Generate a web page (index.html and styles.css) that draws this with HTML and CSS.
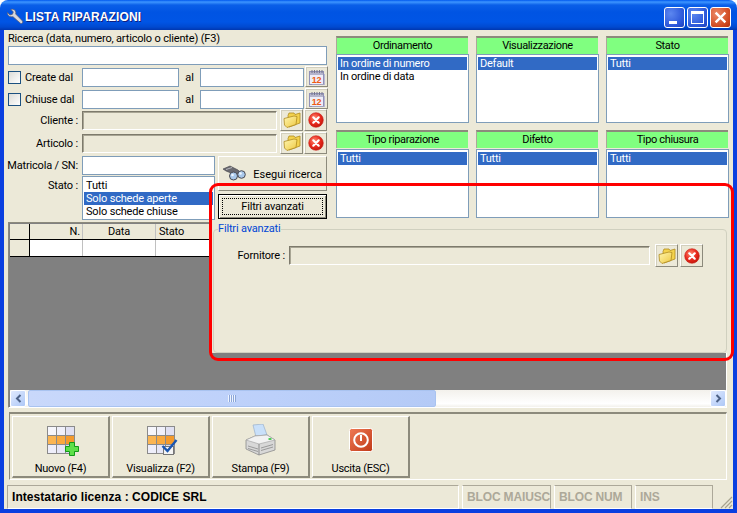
FILE: index.html
```html
<!DOCTYPE html>
<html lang="it">
<head>
<meta charset="utf-8">
<title>Lista riparazioni</title>
<link rel="stylesheet" href="styles.css">
</head>
<body>
<svg class="defs" width="0" height="0" aria-hidden="true">
  <defs>
    <linearGradient id="fold" x1="0" y1="0" x2="1" y2="1"><stop offset="0" stop-color="#fff6b0"/><stop offset="1" stop-color="#eec840"/></linearGradient>
    <radialGradient id="redb" cx=".4" cy=".35" r=".75"><stop offset="0" stop-color="#ff8a70"/><stop offset=".55" stop-color="#e8281c"/><stop offset="1" stop-color="#b81408"/></radialGradient>
    <linearGradient id="ubtn" x1="0" y1="0" x2="1" y2="1"><stop offset="0" stop-color="#ef7a55"/><stop offset="1" stop-color="#c03a18"/></linearGradient>
    <symbol id="i-cal" viewBox="0 0 16 16">
      <rect x=".5" y="2.500" width="14" height="13" fill="#eeeef8" stroke="#9090b8"/>
      <rect x="1" y="3" width="13" height="3" fill="#b4b4cc"/>
      <path d="M3 1v3M5.500 1v3M8 1v3M10.500 1v3M13 1v3" stroke="#77778a"/>
      <path d="M15.500 5v11H3" fill="none" stroke="#b8b8d0"/>
      <text x="7.500" y="14" class="cal-day">12</text>
    </symbol>
    <symbol id="i-folder" viewBox="0 0 18 16">
      <path d="M5 3.500l1-2.500 h5l1 1.500 5-1.500 v10l-11 4z" fill="#f3d24d" stroke="#b08c20" stroke-width=".8"/>
      <path d="M1 6.500l10-2.500 3 .5-1 8-9 3-2.500-2.500z" fill="url(#fold)" stroke="#b08c20" stroke-width=".8"/>
    </symbol>
    <symbol id="i-del" viewBox="0 0 16 16">
      <circle cx="8" cy="8" r="7.300" fill="url(#redb)" stroke="#c8201a" stroke-width=".6"/>
      <path d="M5.300 5.300l5.400 5.400M10.700 5.300l-5.400 5.400" stroke="#fff" stroke-width="2.200" stroke-linecap="round"/>
    </symbol>
    <symbol id="i-bino" viewBox="0 0 24 16">
      <path d="M1 4l7-3 4 2 4 2 3 3-6 2-4-2-5-2z" fill="#6a6a70" stroke="#3e3e44" stroke-width=".6"/>
      <path d="M4 4.500l6-2" stroke="#b8b8be"/>
      <circle cx="11.500" cy="11" r="4" fill="#a9c8ea" stroke="#4a4a52"/>
      <circle cx="19.500" cy="9.500" r="3.800" fill="#a9c8ea" stroke="#4a4a52"/>
      <circle cx="10.500" cy="10" r="1.300" fill="#eef6ff"/>
      <circle cx="18.500" cy="8.500" r="1.300" fill="#eef6ff"/>
    </symbol>
    <symbol id="i-grid" viewBox="0 0 28 28">
      <rect x="0" y="0" width="28" height="28" fill="#8a8a8a"/>
      <rect x="1" y="1" width="8" height="8" fill="#f6f6fc"/><rect x="10" y="1" width="8" height="8" fill="#f0f0fa"/><rect x="19" y="1" width="8" height="8" fill="#e0e0f2"/>
      <rect x="1" y="10" width="8" height="8" fill="#fbb552"/><rect x="10" y="10" width="8" height="8" fill="#f9a93e"/><rect x="19" y="10" width="8" height="8" fill="#f49a2c"/>
      <rect x="1" y="19" width="8" height="8" fill="#eeeefa"/><rect x="10" y="19" width="8" height="8" fill="#e6e6f6"/><rect x="19" y="19" width="8" height="8" fill="#dcdcf0"/>
    </symbol>
    <symbol id="i-print" viewBox="0 0 32 32">
      <path d="M8 1l10-1 4 11-11 2z" fill="#c9e0fa" stroke="#9ab0cc" stroke-width=".7"/>
      <path d="M1 16l9-4 12-1 8 5v10l-16 5L1 25z" fill="#d8d8d8" stroke="#8b8b8b" stroke-width=".8"/>
      <path d="M1 16l13 4 16-4-8-5-12 1z" fill="#f2f2f2" stroke="#a8a8a8" stroke-width=".7"/>
      <path d="M14 20v11" stroke="#8b8b8b"/>
      <path d="M3 22l10 3M3 24.500l10 3M16 24l12-3.500M16 26.500l12-3.500" stroke="#9a9a9a"/>
      <ellipse cx="25" cy="15" rx="1.800" ry="1.100" fill="#45c84a"/>
    </symbol>
    <symbol id="i-exit" viewBox="0 0 24 24">
      <rect x=".5" y=".5" width="23" height="23" rx="2" fill="url(#ubtn)" stroke="#fff"/>
      <circle cx="12" cy="12" r="6.800" fill="none" stroke="#fff" stroke-width="2"/>
      <path d="M12 7v6" stroke="#fff" stroke-width="2"/>
    </symbol>
  </defs>
</svg>

<div class="window">
  <header class="titlebar">
    <svg class="title-icon" viewBox="0 0 18 18" width="18" height="18"><path d="M1.500 4.500L4 7l2.500-.8L7.300 3.800 4.800 1.500C7 .5 9.500 1.800 9.800 4.200L9.700 6l6.800 7c1 1.200-.6 3.200-2 2.300L7 8.700c-3 .6-5.800-1.200-5.500-4.200z" fill="#d8d8dc" stroke="#5a5a70" stroke-width=".7"/></svg>
    <h1 class="title-text">LISTA RIPARAZIONI</h1>
    <div class="win-buttons">
      <span class="win-btn"><span class="glyph-min"></span></span>
      <span class="win-btn"><span class="glyph-max"></span></span>
      <span class="win-btn win-close"><svg viewBox="0 0 12 12" width="13" height="13"><path d="M1.500 1.500l9 9M10.500 1.500l-9 9" stroke="#fff" stroke-width="2.200"/></svg></span>
    </div>
  </header>
  <div class="window-body">
    <main class="client">
      <section class="search-area">
        <div class="form">
          <div class="search-label">Ricerca (data, numero, articolo o cliente) (F3)</div>
          <div class="field search-input"></div>
          <div class="date-row">
            <span class="check"></span><span class="date-label">Create dal</span>
            <span class="field date-from"></span><span class="al">al</span><span class="field date-to"></span>
            <button class="tool-btn"><svg width="16" height="16"><use href="#i-cal"/></svg></button>
          </div>
          <div class="date-row">
            <span class="check"></span><span class="date-label">Chiuse dal</span>
            <span class="field date-from"></span><span class="al">al</span><span class="field date-to"></span>
            <button class="tool-btn"><svg width="16" height="16"><use href="#i-cal"/></svg></button>
          </div>
          <div class="pick-row">
            <span class="form-label">Cliente :</span><span class="disabled-field"></span>
            <button class="tool-btn tall"><svg width="18" height="16"><use href="#i-folder"/></svg></button>
            <button class="tool-btn tall"><svg width="16" height="16"><use href="#i-del"/></svg></button>
          </div>
          <div class="pick-row second">
            <span class="form-label">Articolo :</span><span class="disabled-field"></span>
            <button class="tool-btn tall"><svg width="18" height="16"><use href="#i-folder"/></svg></button>
            <button class="tool-btn tall"><svg width="16" height="16"><use href="#i-del"/></svg></button>
          </div>
          <div class="lower">
            <div class="lower-left">
              <div class="lower-row">
                <span class="form-label">Matricola / SN:</span><span class="field serial"></span>
              </div>
              <div class="lower-row">
                <span class="form-label top">Stato :</span>
                <ul class="listbox state-list">
                  <li>Tutti</li><li class="sel">Solo schede aperte</li><li>Solo schede chiuse</li>
                </ul>
              </div>
            </div>
            <div class="lower-right">
              <button class="raised run-btn"><svg width="24" height="16"><use href="#i-bino"/></svg><span>Esegui ricerca</span></button>
              <button class="focus-btn"><span>Filtri avanzati</span></button>
            </div>
          </div>
        </div>
        <div class="filters">
          <div class="filter wide"><div class="filter-head">Ordinamento</div><ul class="listbox"><li class="sel">In ordine di numero</li><li>In ordine di data</li></ul></div>
          <div class="filter"><div class="filter-head">Visualizzazione</div><ul class="listbox"><li class="sel">Default</li></ul></div>
          <div class="filter"><div class="filter-head">Stato</div><ul class="listbox"><li class="sel">Tutti</li></ul></div>
          <div class="filter wide low"><div class="filter-head">Tipo riparazione</div><ul class="listbox"><li class="sel">Tutti</li></ul></div>
          <div class="filter low"><div class="filter-head">Difetto</div><ul class="listbox"><li class="sel">Tutti</li></ul></div>
          <div class="filter low"><div class="filter-head">Tipo chiusura</div><ul class="listbox"><li class="sel">Tutti</li></ul></div>
        </div>
      </section>

      <section class="grid-frame">
        <div class="grid-head">
          <span class="c-ind"></span><span class="c-n">N.</span><span class="c-data">Data</span><span class="c-stato">Stato</span>
        </div>
        <div class="grid-row">
          <span class="c-ind"></span><span class="c-n"></span><span class="c-data"></span><span class="c-stato"></span>
        </div>
        <div class="grid-empty"></div>
        <div class="hscroll">
          <span class="sb-btn"><svg width="9" height="9" viewBox="0 0 9 9"><path d="M6.500 1L3 4.500 6.500 8" fill="none" stroke="#4d6185" stroke-width="2"/></svg></span>
          <span class="sb-thumb"><span class="sb-grip"></span></span>
          <span class="sb-track"></span>
          <span class="sb-btn"><svg width="9" height="9" viewBox="0 0 9 9"><path d="M2.500 1L6 4.500 2.500 8" fill="none" stroke="#4d6185" stroke-width="2"/></svg></span>
        </div>
      </section>

      <section class="toolbar">
        <button class="big-btn"><span class="big-icon"><svg class="grid-ico" width="28" height="28"><use href="#i-grid"/></svg><svg class="badge" width="14" height="14" viewBox="0 0 14 14"><path d="M4.500 .5h5v4h4v5h-4v4h-5v-4h-4v-5h4z" fill="#5ee04a" stroke="#129a1a"/></svg></span><span>Nuovo (F4)</span></button>
        <button class="big-btn"><span class="big-icon"><svg class="grid-ico" width="28" height="28"><use href="#i-grid"/></svg><svg class="badge check-badge" width="17" height="17" viewBox="0 0 17 17"><rect x="2.500" y="8.500" width="10" height="8" fill="#f4f4f4" stroke="#777"/><path d="M1.500 8l5 5 9-11" fill="none" stroke="#1a55b0" stroke-width="2.400"/></svg></span><span>Visualizza (F2)</span></button>
        <button class="big-btn"><span class="big-icon"><svg width="32" height="32"><use href="#i-print"/></svg></span><span>Stampa (F9)</span></button>
        <button class="big-btn"><span class="big-icon"><svg width="24" height="24"><use href="#i-exit"/></svg></span><span>Uscita (ESC)</span></button>
      </section>

      <footer class="statusbar">
        <span class="st-main">Intestatario licenza : CODICE SRL</span>
        <span class="st-key st-caps">BLOC MAIUSC</span>
        <span class="st-key st-num">BLOC NUM</span>
        <span class="st-key st-ins">INS</span>
        <svg class="st-grip" width="14" height="14" viewBox="0 0 14 14"><path d="M13 2L2 13M13 6L6 13M13 10l-3 3" stroke="#a8a490" stroke-width="1.200"/></svg>
      </footer>

      <section class="advanced">
        <fieldset class="adv-group">
          <legend>Filtri avanzati</legend>
          <div class="adv-row">
            <span class="adv-label">Fornitore :</span>
            <span class="disabled-field"></span>
            <button class="tool-btn adv-btn"><svg width="18" height="16"><use href="#i-folder"/></svg></button>
            <button class="tool-btn adv-btn"><svg width="16" height="16"><use href="#i-del"/></svg></button>
          </div>
        </fieldset>
      </section>
    </main>
    <div class="annotation"></div>
  </div>
</div>
</body>
</html>
```

FILE: styles.css
```css
* { box-sizing: border-box; }
html, body { margin: 0; padding: 0; background: #fff; }
body { font: 11px Roboto, "Liberation Sans", Arial, sans-serif; letter-spacing: -.17px; color: #000; }
.defs { position: absolute; }
button { font: inherit; letter-spacing: inherit; color: inherit; padding: 0; margin: 0; }
ul { list-style: none; margin: 0; padding: 0; }
.cal-day { font: bold 9px "Liberation Sans", Arial, sans-serif; letter-spacing: -.3px; fill: #ee5a14; text-anchor: middle; }

.window { width: 737px; height: 513px; display: flex; flex-direction: column; position: relative; overflow: hidden; }

.titlebar {
  height: 30px; flex: none; display: flex; align-items: center; padding: 4px 6px 0 6px;
  border-radius: 8px 8px 0 0;
  background: linear-gradient(#0058ee 0, #3d95ff 2px, #0a5fe8 5px, #0054e3 12px, #0055e5 22px, #0049d0 27px, #0037b0 30px);
}
.title-icon { flex: none; }
.title-text { margin: 0 0 0 1px; font: bold 12px "Liberation Sans", Arial, sans-serif; color: #fff; text-shadow: 1px 1px 0 #0f1f80; letter-spacing: .15px; }
.win-buttons { margin-left: auto; display: flex; gap: 2px; }
.win-btn {
  width: 21px; height: 21px; border: 1px solid #fff; border-radius: 3px; display: flex; align-items: center; justify-content: center; position: relative;
  background: radial-gradient(circle at 30% 30%, #5c87f0, #2a55d8 70%, #2040b8);
}
.win-close { background: radial-gradient(circle at 30% 30%, #ec8a68, #d0481f 70%, #b03010); }
.glyph-min { position: absolute; left: 4px; bottom: 3px; width: 8px; height: 3px; background: #fff; }
.glyph-max { width: 13px; height: 13px; border: 1px solid #fff; border-top-width: 3px; }

.window-body { flex: 1; padding: 0 4px 4px; background: #0a3fe0; position: relative; }
.client { width: 729px; height: 479px; background: #ece9d8; display: flex; flex-direction: column; position: relative; }

.search-area { height: 192px; flex: none; display: flex; padding-left: 4px; }
.form { width: 319px; flex: none; }
.search-label { height: 16px; line-height: 18px; }
.field { display: block; background: #fff; border: 1px solid #7f9db9; height: 19px; }
.date-row { display: flex; align-items: flex-end; height: 21px; margin-top: 1px; }
.check { width: 13px; height: 13px; border: 1px solid #1c5180; background: linear-gradient(135deg, #dcdcd7, #fff); margin: 0 4px 3px 0; flex: none; }
.date-label { width: 57px; flex: none; height: 19px; line-height: 19px; }
.date-from { width: 97px; flex: none; }
.al { width: 21px; flex: none; text-align: center; height: 19px; line-height: 19px; }
.date-to { width: 104px; flex: none; }
.tool-btn {
  width: 23px; height: 21px; flex: none; display: flex; align-items: center; justify-content: center;
  background: #ece9d8; border: 1px solid; border-color: #fff #8c8a7c #8c8a7c #fff;
  box-shadow: 1px 1px 0 #d2cfbd inset;
}
.date-row .tool-btn { margin-left: 1px; }
.pick-row { display: flex; align-items: center; height: 22px; margin-top: 0; }
.pick-row.second { margin-top: 1px; }
.form-label { width: 70px; flex: none; margin-right: 4px; display: flex; justify-content: flex-end; white-space: nowrap; }
.form-label.top { height: 19px; align-items: center; }
.disabled-field {
  display: block; flex: none; width: 195px; height: 19px; background: #ece9d8;
  border: 1px solid; border-color: #7d7a6c #fff #fff #7d7a6c; box-shadow: 1px 1px 0 #a8a594 inset;
}
.tool-btn.tall { height: 22px; }
.disabled-field + .tool-btn { margin-left: 3px; }
.tool-btn + .tool-btn { margin-left: 1px; }

.lower { display: flex; margin-top: 2px; }
.lower-left { width: 207px; flex: none; }
.lower-row { display: flex; align-items: flex-start; }
.lower-row + .lower-row { margin-top: 1px; }
.lower-row:first-child { align-items: center; }
.serial { width: 133px; flex: none; }
.state-list { width: 133px; height: 43px; flex: none; }
.lower-right { margin-left: 3px; width: 109px; flex: none; display: flex; flex-direction: column; }
.raised { background: #ece9d8; border: 1px solid; border-color: #fff #8c8a7c #8c8a7c #fff; }
.run-btn { height: 35px; position: relative; display: flex; align-items: flex-start; padding: 8px 0 0 3px; }
.run-btn span { position: absolute; right: 4px; top: 11px; white-space: nowrap; letter-spacing: 0; }
.focus-btn { height: 25px; margin-top: 3px; background: #ece9d8; border: 1px solid #000; box-shadow: inset 1px 1px 0 #fff, inset -1px -1px 0 #8c8a7c; padding: 3px; }
.focus-btn span { display: flex; align-items: center; justify-content: center; height: 100%; border: 1px dotted #000; }

.listbox { background: #fff; border: 1px solid #7f9db9; padding: 2px 1px 1px; height: 100%; }
.listbox li { height: 13px; line-height: 13px; padding-left: 2px; white-space: nowrap; }
.listbox li.sel { background: #316ac5; color: #fff; }
.filters .listbox li { letter-spacing: -.25px; }

.filters { margin-left: 9px; display: grid; grid-template-columns: 133px 123px 123px; column-gap: 7px; grid-template-rows: 87px 88px; row-gap: 7px; padding-top: 6px; height: 188px; }
.filter { display: flex; flex-direction: column; }
.filter .listbox { flex: 1; margin-top: 0; }
.filter-head { height: 18px; flex: none; text-align: center; line-height: 15px; letter-spacing: -.35px; background: #80ff80; border-top: 2px solid #8c8a7c; border-left: 1px solid #aca899; width: calc(100% - 1px); }
.filter.low .listbox { margin-top: 1px; }

.grid-frame { margin: 0 0 0 4px; width: 719px; height: 186px; flex: none; border: 1px solid; border-color: #8c8a7c #fff #fff #8c8a7c; padding: 1px 0 0 1px; background: #808080; display: flex; flex-direction: column; }
.grid-head, .grid-row { display: flex; flex: none; }
.grid-head { height: 16px; background: #ece9d8; border-bottom: 1px solid #000; line-height: 15px; }
.grid-row { height: 17px; background: #fff; border-bottom: 1px solid #000; }
.c-ind { width: 20px; flex: none; border-right: 1px solid #000; background: #ece9d8; }
.c-n { width: 53px; flex: none; text-align: right; padding-right: 2px; border-right: 1px solid #c0c0c0; }
.c-data { width: 73px; flex: none; text-align: center; border-right: 1px solid #c0c0c0; }
.c-stato { flex: 1; padding-left: 3px; }
.grid-empty { flex: 1; }
.hscroll { height: 17px; flex: none; display: flex; align-items: stretch; background: linear-gradient(#f3f1ec, #fff 80%, #f3f1ec); margin-right: 0; }
.sb-btn { width: 16px; flex: none; display: flex; align-items: center; justify-content: center; border: 1px solid #fff; border-radius: 2px; background: linear-gradient(135deg, #e1eafe, #aec8f7); }
.sb-thumb { width: 408px; margin-left: 2px; flex: none; display: flex; align-items: center; justify-content: center; border: 1px solid #a9c3f0; border-radius: 2px; background: linear-gradient(90deg, #c9d8fb, #bcd0fa 60%, #b4caf6); }
.sb-grip { width: 8px; height: 7px; background: repeating-linear-gradient(90deg, #eef4ff 0 1px, #8ca6d8 1px 2px); }
.sb-track { flex: 1; }

.toolbar { margin: 4px 0 0 5px; width: 718px; height: 68px; flex: none; display: flex; gap: 2px; border-top: 2px solid #8c8a7c; border-left: 1px solid #8c8a7c; border-right: 1px solid #fff; border-bottom: 1px solid #fff; padding: 2px 0 0 2px; }
.big-btn { width: 98px; height: 62px; flex: none; display: flex; flex-direction: column; align-items: center; background: #ece9d8; border: 1px solid; border-color: #fff #8c8a7c #8c8a7c #fff; border-width: 1px 2px 2px 1px; }
.big-btn > span:last-child { margin-top: auto; padding-bottom: 0; line-height: 15px; white-space: nowrap; letter-spacing: -.25px; }
.big-icon { height: 40px; position: relative; display: flex; align-items: center; justify-content: center; width: 100%; margin-top: 3px; }
.grid-ico { position: relative; left: 0; }
.badge { position: absolute; left: 52px; top: 22px; }
.check-badge { left: 48px; top: 18px; }

.statusbar { margin: 5px 0 0 3px; flex: 1; display: flex; align-items: stretch; position: relative; font: bold 12px "Liberation Sans", Arial, sans-serif; line-height: 22px; padding-bottom: 1px; letter-spacing: 0; }
.st-main { width: 452px; flex: none; padding-left: 4px; letter-spacing: .06px; border: 1px solid; border-color: #aca899 #fff #fff #aca899; }
.st-key { flex: none; margin-left: 3px; padding-left: 4px; color: #aca899; letter-spacing: -.15px; border: 1px solid; border-color: #aca899 #aca899 #fff #fff; white-space: nowrap; overflow: hidden; }
.st-caps { width: 89px; }
.st-num { width: 78px; }
.st-ins { width: 78px; }
.st-grip { position: absolute; right: 0; bottom: 1px; }

.advanced { position: absolute; left: 208px; top: 190px; width: 515px; height: 133px; background: #ece9d8; padding: 1px 0 0 1px; }
.adv-group { margin: 0; padding: 0; height: 100%; border: 1px solid #d0d0bf; border-radius: 4px; min-width: 0; }
.adv-group legend { margin-left: 4px; padding: 0; color: #0046d5; line-height: 16px; }
.adv-row { display: flex; align-items: center; height: 23px; margin-top: 7px; }
.adv-label { width: 75px; flex: none; text-align: right; padding-right: 4px; }
.adv-row .disabled-field { width: 361px; }
.adv-btn { height: 23px; }
.disabled-field + .adv-btn { margin-left: 5px; }
.adv-btn + .adv-btn { margin-left: 2px; }

.annotation { position: absolute; left: 209px; top: 153px; width: 525px; height: 178px; border: 3px solid #ff0000; border-radius: 9px; pointer-events: none; }
```
